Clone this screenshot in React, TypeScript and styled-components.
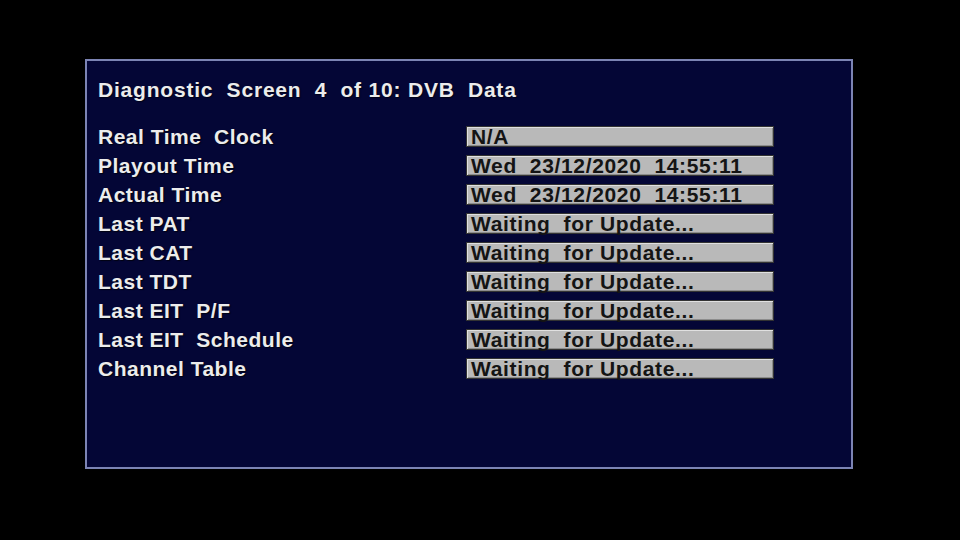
import React from 'react'
import styled, { createGlobalStyle } from 'styled-components'

const GlobalStyle = createGlobalStyle`
  html, body {
    margin: 0;
    padding: 0;
    background: #000;
  }
  body {
    width: 960px;
    height: 540px;
    overflow: hidden;
    font-family: 'Liberation Sans', Arial, sans-serif;
  }
`

const Screen = styled.div`
  width: 960px;
  height: 540px;
  background: #000;
  padding: 59px 0 0 85px;
  box-sizing: border-box;
`

const Panel = styled.div`
  width: 768px;
  height: 410px;
  box-sizing: border-box;
  border: 2px solid #7c84b4;
  background: #040636;
  padding: 16px 0 0 11px;
`

const Title = styled.div`
  color: #ececec;
  font-size: 21px;
  font-weight: bold;
  letter-spacing: 0.8px;
  line-height: 26px;
  white-space: pre;
  text-shadow: 1px 1px 1px rgba(0, 0, 0, 0.6);
  margin-bottom: 23px;
`

const Rows = styled.div`
  display: grid;
  grid-template-columns: 368px 308px;
  grid-auto-rows: 29px;
`

const Label = styled.div`
  color: #ececec;
  font-size: 21px;
  font-weight: bold;
  letter-spacing: 0.5px;
  line-height: 21px;
  white-space: pre;
  text-shadow: 1px 1px 1px rgba(0, 0, 0, 0.7);
`

const Value = styled.div`
  height: 21px;
  box-sizing: border-box;
  background: #b9b9b9;
  border: 1px solid #333;
  box-shadow: inset 1px 1px 0 #e0e0e0, inset -1px -1px 0 #8c8c8c;
  color: #141414;
  font-size: 21px;
  font-weight: bold;
  letter-spacing: 0.65px;
  line-height: 19px;
  padding-left: 4px;
  white-space: pre;
`

const rows: [string, string][] = [
  ['Real Time  Clock', 'N/A'],
  ['Playout Time', 'Wed  23/12/2020  14:55:11'],
  ['Actual Time', 'Wed  23/12/2020  14:55:11'],
  ['Last PAT', 'Waiting  for Update...'],
  ['Last CAT', 'Waiting  for Update...'],
  ['Last TDT', 'Waiting  for Update...'],
  ['Last EIT  P/F', 'Waiting  for Update...'],
  ['Last EIT  Schedule', 'Waiting  for Update...'],
  ['Channel Table', 'Waiting  for Update...'],
]

export default function App() {
  return (
    <>
      <GlobalStyle />
      <Screen>
        <Panel>
          <Title>Diagnostic  Screen  4  of 10: DVB  Data</Title>
          <Rows>
            {rows.map(([label, value]) => (
              <React.Fragment key={label}>
                <Label>{label}</Label>
                <Value>{value}</Value>
              </React.Fragment>
            ))}
          </Rows>
        </Panel>
      </Screen>
    </>
  )
}
